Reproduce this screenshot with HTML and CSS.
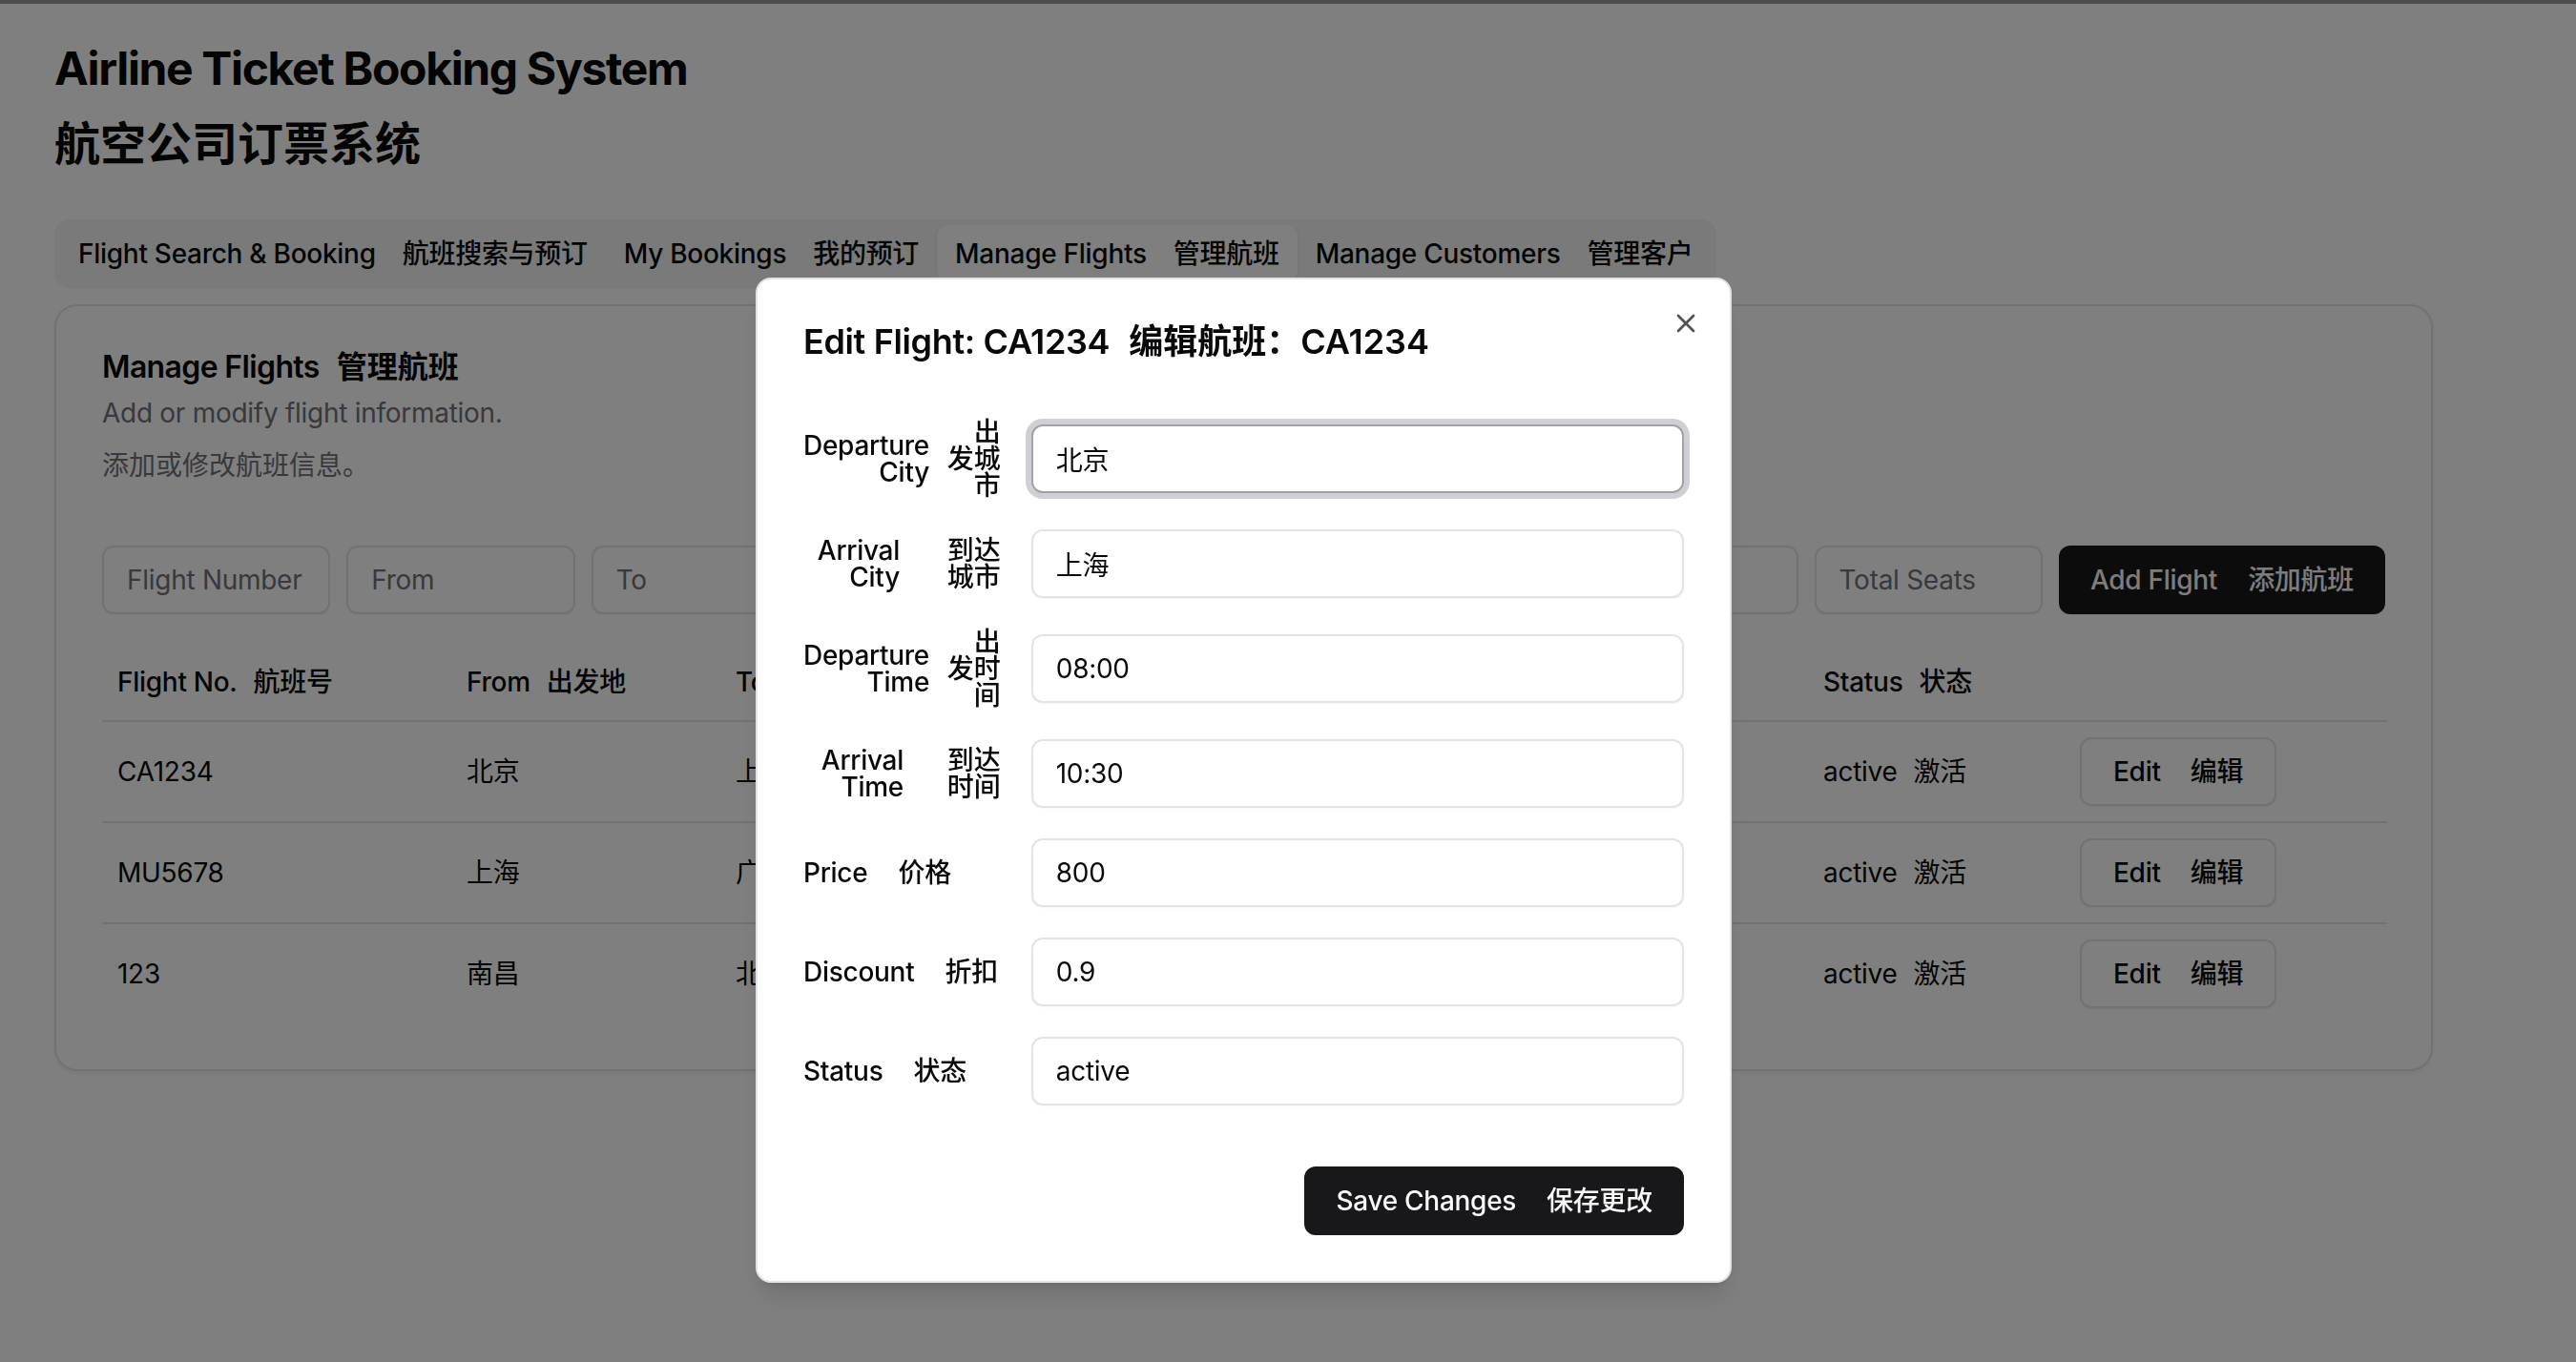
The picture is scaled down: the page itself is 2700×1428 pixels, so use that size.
FILE: index.html
```html
<!DOCTYPE html>
<html lang="zh-CN">
<head>
<meta charset="utf-8">
<title>Airline Ticket Booking System</title>
<link rel="stylesheet" href="styles.css">
</head>
<body>
<div class="topbar"></div>
<main class="page">
  <h1 class="app-title"><span class="line en-line">Airline Ticket Booking System</span><span class="line">航空公司订票系统</span></h1>

  <nav class="tabs">
    <button class="tab"><span>Flight Search &amp; Booking</span><span class="zh">航班搜索与预订</span></button>
    <button class="tab"><span>My Bookings</span><span class="zh">我的预订</span></button>
    <button class="tab active"><span>Manage Flights</span><span class="zh">管理航班</span></button>
    <button class="tab"><span>Manage Customers</span><span class="zh">管理客户</span></button>
  </nav>

  <section class="card">
    <header class="card-header">
      <h2 class="card-title"><span class="en">Manage Flights</span><span class="zh">管理航班</span></h2>
      <p class="card-desc">Add or modify flight information.</p>
      <p class="card-desc second">添加或修改航班信息。</p>
    </header>

    <div class="add-form">
      <input class="input" placeholder="Flight Number">
      <input class="input" placeholder="From">
      <input class="input" placeholder="To">
      <input class="input" placeholder="Departure Time">
      <input class="input" placeholder="Arrival Time">
      <input class="input" placeholder="Price">
      <input class="input" placeholder="Discount">
      <input class="input" placeholder="Total Seats">
      <button class="btn btn-primary"><span>Add Flight</span><span class="zh">添加航班</span></button>
    </div>

    <table class="table">
      <colgroup>
        <col><col><col><col><col><col><col><col>
      </colgroup>
      <thead>
        <tr>
          <th><span>Flight No.</span><span class="zh">航班号</span></th>
          <th><span>From</span><span class="zh">出发地</span></th>
          <th><span>To</span><span class="zh">到达地</span></th>
          <th><span>Departure</span><span class="zh">出发</span></th>
          <th><span>Arrival</span><span class="zh">到达</span></th>
          <th><span>Price</span><span class="zh">价格</span></th>
          <th><span>Status</span><span class="zh">状态</span></th>
          <th></th>
        </tr>
      </thead>
      <tbody>
        <tr>
          <td>CA1234</td><td>北京</td><td>上海</td><td>08:00</td><td>10:30</td><td>800</td>
          <td><span>active</span><span class="zh">激活</span></td>
          <td><button class="btn btn-outline"><span>Edit</span><span class="zh">编辑</span></button></td>
        </tr>
        <tr>
          <td>MU5678</td><td>上海</td><td>广州</td><td>09:00</td><td>11:30</td><td>900</td>
          <td><span>active</span><span class="zh">激活</span></td>
          <td><button class="btn btn-outline"><span>Edit</span><span class="zh">编辑</span></button></td>
        </tr>
        <tr>
          <td>123</td><td>南昌</td><td>北京</td><td>12:00</td><td>14:00</td><td>600</td>
          <td><span>active</span><span class="zh">激活</span></td>
          <td><button class="btn btn-outline"><span>Edit</span><span class="zh">编辑</span></button></td>
        </tr>
      </tbody>
    </table>
  </section>
</main>

<div class="overlay"></div>

<div class="dialog" role="dialog">
  <button class="dialog-close" aria-label="Close">
    <svg viewBox="0 0 24 24" width="32" height="32" fill="none" stroke="currentColor" stroke-width="2" stroke-linecap="round" stroke-linejoin="round"><path d="M18 6 6 18"/><path d="m6 6 12 12"/></svg>
  </button>
  <h2 class="dialog-title"><span>Edit Flight: CA1234</span><span class="zh">编辑航班：CA1234</span></h2>

  <div class="dialog-form">
    <label class="flabel split"><span class="en">Departure<br>City</span><span class="zhl">出<br>发城<br>市</span></label>
    <input class="input field focused" value="北京">

    <label class="flabel split"><span class="en w-arr-city">Arrival<br>City</span><span class="zhl">到达<br>城市</span></label>
    <input class="input field" value="上海">

    <label class="flabel split"><span class="en">Departure<br>Time</span><span class="zhl">出<br>发时<br>间</span></label>
    <input class="input field" value="08:00">

    <label class="flabel split"><span class="en w-arr-time">Arrival<br>Time</span><span class="zhl">到达<br>时间</span></label>
    <input class="input field" value="10:30">

    <label class="flabel"><span>Price</span><span>价格</span></label>
    <input class="input field" value="800">

    <label class="flabel"><span>Discount</span><span>折扣</span></label>
    <input class="input field" value="0.9">

    <label class="flabel"><span>Status</span><span>状态</span></label>
    <input class="input field" value="active">
  </div>

  <div class="dialog-footer">
    <button class="btn btn-primary"><span>Save Changes</span><span class="zh">保存更改</span></button>
  </div>
</div>
</body>
</html>
```

FILE: styles.css
```css
* { box-sizing: border-box; }

html, body {
  margin: 0;
  padding: 0;
}

body {
  width: 2700px;
  height: 1428px;
  overflow: hidden;
  position: relative;
  background: #ffffff;
  color: #09090b;
  font-family: Inter, "Noto Sans CJK SC", sans-serif;
  font-size: 28px;
  letter-spacing: -0.01em;
}

.topbar {
  height: 4px;
  background: #989898;
}

.page {
  padding: 28px 0 0 57px;
}

/* ---------- title ---------- */
.app-title {
  margin: 0;
  font-size: 48px;
  font-weight: 700;
  line-height: 79px;
  letter-spacing: 0;
}
.app-title .line { display: block; }
.app-title .en-line { letter-spacing: -0.028em; }

/* ---------- tabs ---------- */
.tabs {
  display: flex;
  width: fit-content;
  align-items: center;
  margin-top: 40px;
  height: 72px;
  padding: 6px;
  background: #f4f4f5;
  border-radius: 16px;
}

.tab {
  display: flex;
  align-items: center;
  height: 60px;
  padding: 0 17px;
  border: 2px solid transparent;
  border-radius: 12px;
  background: transparent;
  color: #09090b;
  font-family: inherit;
  font-size: 28px;
  font-weight: 500;
  line-height: 40px;
  letter-spacing: -0.01em;
  white-space: nowrap;
}
.tab .zh { margin-left: 28px; }
.tab.active {
  background: #ffffff;
  box-shadow: 0 1px 3px rgba(0,0,0,0.1), 0 1px 2px -1px rgba(0,0,0,0.1);
}

/* ---------- card ---------- */
.card {
  width: 2493px;
  margin-top: 17px;
  border: 2px solid #e4e4e7;
  border-radius: 24px;
  padding: 48px;
  background: #ffffff;
  box-shadow: 0 2px 4px rgba(0,0,0,0.06);
}

.card-title {
  margin: 0;
  font-size: 32px;
  font-weight: 600;
  line-height: 32px;
  display: flex;
  letter-spacing: 0;
}
.card-title .en { letter-spacing: -0.02em; }
.card-title .zh { margin-left: 18px; }

.card-desc {
  margin: 12px 0 0;
  color: #71717a;
  font-size: 28px;
  line-height: 40px;
}
.card-desc.second { margin-top: 15px; letter-spacing: 0; }

/* ---------- add form ---------- */
.add-form {
  display: flex;
  gap: 17px;
  margin-top: 64px;
  margin-bottom: 30px;
}

.input {
  height: 72px;
  border: 2px solid #e4e4e7;
  border-radius: 12px;
  padding: 0 24px;
  background: transparent;
  box-shadow: 0 1px 2px rgba(0,0,0,0.05);
  font-family: inherit;
  font-size: 28px;
  letter-spacing: -0.01em;
  color: #09090b;
  outline: none;
}
.input::placeholder { color: #71717a; opacity: 1; }

.add-form .input {
  flex: 1 1 0;
  min-width: 0;
}

.btn {
  display: inline-flex;
  align-items: center;
  height: 72px;
  padding: 0 33px;
  border-radius: 12px;
  font-family: inherit;
  font-size: 28px;
  font-weight: 500;
  line-height: 40px;
  letter-spacing: -0.01em;
  white-space: nowrap;
}
.btn .zh { margin-left: 32px; }

.btn-primary {
  background: #18181b;
  color: #fafafa;
  border: none;
  box-shadow: 0 1px 2px rgba(0,0,0,0.05);
}

.btn-outline {
  background: #ffffff;
  color: #09090b;
  border: 2px solid #e4e4e7;
  box-shadow: 0 1px 2px rgba(0,0,0,0.05);
}

/* ---------- table ---------- */
.table {
  width: 2395px;
  table-layout: fixed;
  border-collapse: collapse;
  font-size: 28px;
  line-height: 40px;
}
.table col:nth-child(1) { width: 366px; }
.table col:nth-child(2) { width: 282px; }
.table col:nth-child(3) { width: 285px; }
.table col:nth-child(4) { width: 285px; }
.table col:nth-child(5) { width: 285px; }
.table col:nth-child(6) { width: 285px; }
.table col:nth-child(7) { width: 269px; }
.table col:nth-child(8) { width: 338px; }

.table th {
  height: 82px;
  padding: 0 16px;
  text-align: left;
  vertical-align: middle;
  font-weight: 500;
  white-space: nowrap;
  border-bottom: 2px solid #e4e4e7;
}
.table td {
  padding: 16px;
  vertical-align: middle;
  white-space: nowrap;
  border-bottom: 2px solid #e4e4e7;
}
.table tbody tr:last-child td { border-bottom: none; }
.table .zh { margin-left: 17px; }
.table .btn-outline .zh { margin-left: 31px; }

/* ---------- overlay & dialog ---------- */
.overlay {
  position: fixed;
  inset: 0;
  background: rgba(0,0,0,0.5);
}

.dialog {
  position: fixed;
  top: 291px;
  left: 792px;
  width: 1023px;
  display: grid;
  gap: 32px;
  padding: 48px;
  background: #ffffff;
  border: 2px solid #e4e4e7;
  border-radius: 16px;
  box-shadow: 0 20px 25px -5px rgba(0,0,0,0.1), 0 8px 10px -6px rgba(0,0,0,0.1);
}

.dialog-close {
  position: absolute;
  top: 30px;
  right: 30px;
  width: 32px;
  height: 32px;
  padding: 0;
  border: none;
  background: transparent;
  color: #09090b;
  opacity: 0.7;
  display: flex;
}

.dialog-title {
  margin: 0;
  font-size: 36px;
  font-weight: 600;
  line-height: 34px;
  letter-spacing: -0.01em;
  display: flex;
}
.dialog-title .zh { margin-left: 20px; letter-spacing: 0; }

.dialog-form {
  display: grid;
  grid-template-columns: repeat(4, 1fr);
  column-gap: 32px;
  row-gap: 32px;
  align-items: center;
  padding: 32px 0;
}

.flabel {
  grid-column: 1;
  display: flex;
  align-items: center;
  gap: 32px;
  font-size: 28px;
  font-weight: 500;
  line-height: 28px;
  white-space: nowrap;
}
.flabel.split {
  justify-content: space-between;
  gap: 0;
}
.flabel .en { text-align: right; }
.flabel .zhl {
  width: 56px;
  text-align: right;
  letter-spacing: 0;
}
.flabel .w-arr-city { width: 101px; }
.flabel .w-arr-time { width: 105px; }

.field {
  grid-column: 2 / span 3;
  width: 100%;
  background: #ffffff;
}
.field.focused {
  border-color: #a1a1aa;
  box-shadow: 0 0 0 6px rgba(161,161,170,0.5);
}

.dialog-footer {
  display: flex;
  justify-content: flex-end;
}
```
